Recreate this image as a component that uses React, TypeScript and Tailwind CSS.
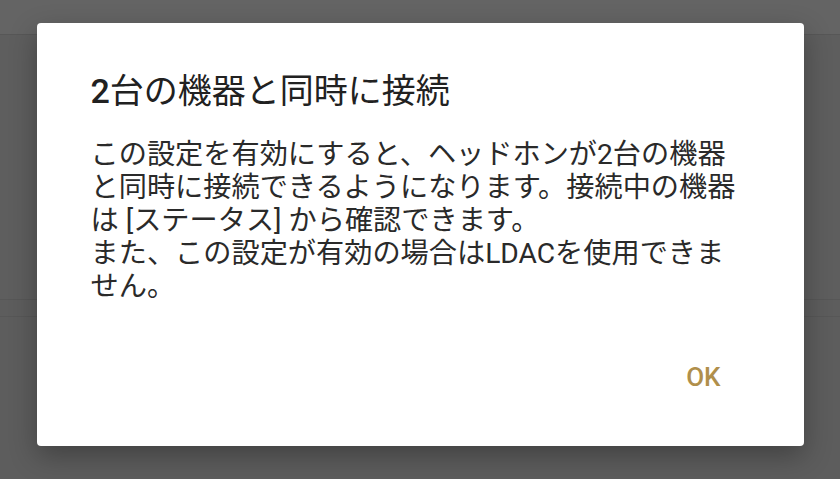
import React from 'react';

const font = "font-['Roboto','Noto_Sans_CJK_JP',sans-serif]";

export default function App() {
  return (
    <div className={`relative h-[479px] w-[840px] overflow-hidden bg-[#5d5d5d] ${font}`}>
      {/* 背景の設定画面（暗転） */}
      <div className="h-[35px] border-b border-[#575757] bg-[#646464]" />
      <div className="h-[265px] border-b border-[#575757] bg-[#5e5e5e]" />
      <div className="h-[17px] border-b border-[#575757] bg-[#5d5d5d]" />

      {/* ダイアログ */}
      <div className="absolute inset-0 flex justify-center pt-[23px]">
        <div className="flex h-[423px] w-[767px] flex-col rounded-[4px] bg-white shadow-[0_10px_28px_rgba(0,0,0,0.3)]">
          <h2 className="pl-[54px] pt-[48px] text-[34px] leading-[40px] text-[#212121]">
            <span className="font-medium">2</span>台の機器と同時に接続
          </h2>
          <div className="mt-[27px] pl-[54px] text-[28.2px] leading-[33px] text-[#2a2a2a]">
            <p>この設定を有効にすると、ヘッドホンが2台の機器</p>
            <p>と同時に接続できるようになります。接続中の機器</p>
            <p>は [ステータス] から確認できます。</p>
            <p>また、この設定が有効の場合はLDACを使用できま</p>
            <p>せん。</p>
          </div>
          <div className="mt-auto flex justify-end pb-[54px] pr-[83px]">
            <button className="text-[26px] font-medium leading-[30px] text-[#b08f4b]">OK</button>
          </div>
        </div>
      </div>
    </div>
  );
}
